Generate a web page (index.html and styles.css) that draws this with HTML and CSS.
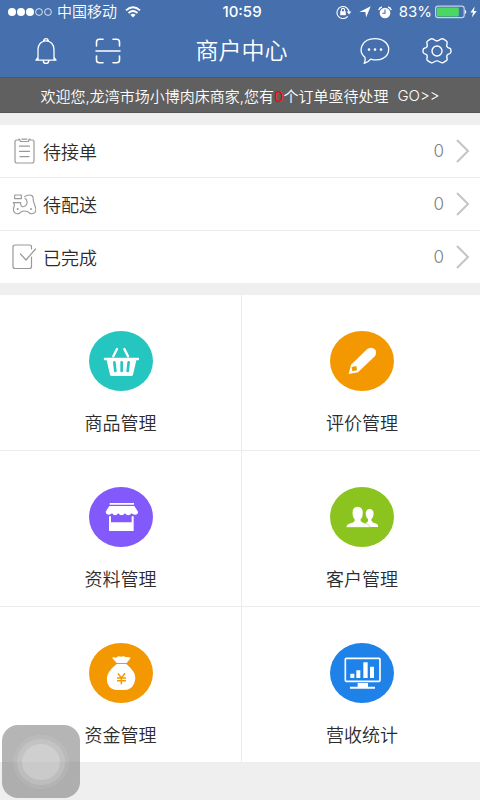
FILE: index.html
```html
<!DOCTYPE html>
<html lang="zh-CN">
<head>
<meta charset="utf-8">
<meta name="viewport" content="width=device-width, initial-scale=1">
<title>商户中心</title>
<link rel="stylesheet" href="styles.css">
</head>
<body>
<header class="top">
  <div class="status">
    <div class="status-side">
      <svg class="signal" width="46" height="10" viewBox="0 0 46 10" fill="#fff"><circle cx="5" cy="5" r="4"/><circle cx="14" cy="5" r="4"/><circle cx="23" cy="5" r="4"/><g fill="none" stroke="#fff" stroke-width=".8"><circle cx="32" cy="5" r="3.4"/><circle cx="41" cy="5" r="3.4"/></g></svg>
      <span>中国移动</span>
      <svg class="wifi" width="16" height="12" viewBox="0 0 16 12" fill="none" stroke="#fff" stroke-width="1.9"><path d="M1 4.4Q8-1.8 15 4.4M3.5 7Q8 3.2 12.5 7"/><path d="M5.4 8.7Q8 6.6 10.6 8.7L8 11.4Z" fill="#fff" stroke="none"/></svg>
    </div>
    <time class="clock">10:59</time>
    <div class="status-side status-end">
      <svg width="16" height="14" viewBox="0 0 16 14" fill="none" stroke="#fff" stroke-width="1.1"><path d="M11.7 11.3A6 6 0 1 1 13 7.6"/><path d="M10.8 6.6h4.6L13.1 9.4Z" fill="#fff" stroke="none"/><path d="M4.2 6.2h5.6v4H4.2Z" fill="#fff" stroke="none"/><path d="M5.4 6.4V5a1.6 1.6 0 0 1 3.2 0v1.4"/></svg>
      <svg width="12" height="12" viewBox="0 0 12 12" fill="#fff"><path d="M11.7.3 7.1 11.6 6.4 6H.4Z"/></svg>
      <svg width="14" height="13" viewBox="0 0 14 13"><circle cx="7" cy="7" r="5.3" fill="#fff"/><path d="M.8 4.1Q1.3 1.7 3.9 1M13.2 4.1Q12.7 1.7 10.1 1" fill="none" stroke="#fff" stroke-width="1.3"/><path d="M7 3.6V7.3H4.2" fill="none" stroke="#456fad" stroke-width="1.1"/></svg>
      <span class="percent">83%</span>
      <svg class="battery" width="42" height="14" viewBox="0 0 42 14"><rect x=".6" y="1.2" width="28.6" height="11.4" rx="2.4" fill="none" stroke="#c7d2e6" stroke-width="1.2"/><rect x="1.8" y="2.4" width="22" height="9" rx="1" fill="#4bd763"/><path d="M30 4.4Q32.5 6.8 30 9.2Z" fill="#fff"/><path d="M39.6 1.6 35.4 7.6h2.6L36.8 12.4 41.8 6H39Z" fill="#fff"/></svg>
    </div>
  </div>
  <nav class="bar">
    <div class="bar-side">
      <button class="icon-button" type="button" aria-label="通知"><svg width="24" height="28" viewBox="0 0 24 28" fill="none" stroke="#fff" stroke-width="1.3" stroke-linecap="round" stroke-linejoin="round"><path d="M2 23.2h20M4 23V12.6C4 7.3 7.4 3.9 12 3.9s8 3.4 8 8.7V23M4 20.5 2 23.2M20 20.5l2 2.7M9.8 4.2C9.6.7 14.4.7 14.2 4.2M9.2 23.8c.5 3.5 5.1 3.5 5.6 0"/></svg></button>
      <button class="icon-button" type="button" aria-label="扫一扫"><svg width="26" height="26" viewBox="0 0 26 26" fill="none" stroke="#fff" stroke-width="1.6" stroke-linecap="round"><path d="M1.5 8V4q0-2.8 2.8-2.8H8M18 1.2h3.7q2.8 0 2.8 2.8v4M1.5 18v4q0 2.8 2.8 2.8H8M18 24.8h3.7q2.8 0 2.8-2.8v-4M1 13h24"/></svg></button>
    </div>
    <h1 class="title">商户中心</h1>
    <div class="bar-side bar-end">
      <button class="icon-button" type="button" aria-label="消息"><svg width="30" height="28" viewBox="0 0 30 28" fill="none" stroke="#fff" stroke-width="1.3" stroke-linejoin="round"><path d="M4.9 20.3C-2.8 13.5 2 1.6 15 1.6c7.6 0 13.7 4.5 13.7 10.6 0 8.7-9.3 12.5-18 9.9Q8 25.5 4.2 26.3 5.6 23.8 4.9 20.3Z"/><g fill="#fff" stroke="none"><circle cx="9" cy="12.6" r="1.3"/><circle cx="15" cy="12.6" r="1.3"/><circle cx="21" cy="12.6" r="1.3"/></g></svg></button>
      <button class="icon-button" type="button" aria-label="设置"><svg width="30" height="28" viewBox="0 0 30 28" fill="none" stroke="#fff" stroke-width="1.4" stroke-linejoin="round"><path d="M8.4 2.2Q10 1.2 11.5 2.3 15 5.5 18.5 2.3 20 1.2 21.6 2.2L24.4 4Q25.7 5 25 6.8C24.1 9.5 25.3 10.7 27.7 11.2Q29 11.6 29 13.9T27.7 16.6C25.2 17.3 24.2 18.5 25 21.1Q25.6 22.7 24.4 23.7L21.6 25.4Q20 26.4 18.5 25.3 15 22.4 11.5 25.3 10 26.4 8.4 25.4L5.6 23.7Q4.4 22.7 5 21.1C5.8 18.5 4.8 17.3 2.3 16.6Q1 16.2 1 13.9T2.3 11.2C4.7 10.7 5.9 9.5 5 6.8Q4.3 5 5.6 4Z"/><circle cx="15" cy="14" r="5"/></svg></button>
    </div>
  </nav>
</header>
<a class="notice" href="#orders"><span>欢迎您,龙湾市场小博肉床商家,您有<span class="alert">0</span>个订单亟待处理</span><span>GO&gt;&gt;</span></a>
<main>
  <section class="orders" id="orders">
    <a class="order" href="#pending">
      <svg width="24" height="26" viewBox="0 0 24 26" fill="none" stroke="#999" stroke-width="1.2" stroke-linecap="round"><path d="M7 2H4.6Q3 2 3 3.8v19Q3 25 4.8 25h15.4Q22 25 22 22.8v-19Q22 2 20.4 2H18M7 1.2Q8 1 8.5 3.5h8Q17 1 18 1.2M10 1.2h5M7.5 8.2h10M7.5 13.4h10M8 18.6h9"/></svg>
      <span>待接单</span><span class="count">0</span>
      <svg class="chevron" width="14" height="24" viewBox="0 0 14 24"><path d="m1 1 11 11L1 23"/></svg>
    </a>
    <a class="order" href="#delivery">
      <svg width="24" height="26" viewBox="36 212 72 78" fill="none" stroke="#999" stroke-width="3.4" stroke-linecap="round" stroke-linejoin="round"><path d="M44 224h20v11H44ZM40 247h22v6q3 9 12 5 9-5 7-14-1-7-6-10M74 229q6-5 14-5 9 0 11 6 0 13 5 24 7 17 0 23-8 6-16 1-4-6-15-6-10 0-13 6-8 5-16-1-7-7-1-20 1-5-3-10"/><g fill="#999" stroke="none"><circle cx="53" cy="266" r="3"/><circle cx="93" cy="266" r="3"/></g></svg>
      <span>待配送</span><span class="count">0</span>
      <svg class="chevron" width="14" height="24" viewBox="0 0 14 24"><path d="m1 1 11 11L1 23"/></svg>
    </a>
    <a class="order" href="#done">
      <svg width="24" height="26" viewBox="0 0 24 26" fill="none" stroke="#999" stroke-width="1.2" stroke-linecap="round"><path d="M19.5 5V3Q19.5 1 17.5 1H3Q1 1 1 3v19.5Q1 24.5 3 24.5h14.5q2 0 2-2V13M8.5 10l5.5 6L23.5 5"/></svg>
      <span>已完成</span><span class="count">0</span>
      <svg class="chevron" width="14" height="24" viewBox="0 0 14 24"><path d="m1 1 11 11L1 23"/></svg>
    </a>
  </section>
  <section class="tiles">
    <a class="tile" href="#goods"><span class="disc teal"><svg width="64" height="60" viewBox="0 0 192 180" fill="#fff"><path d="M46 80h103q3 4 0 8h-7l-10 43q-1 4-6 4H69q-5 0-6-4L53 88h-7q-4-4 0-8Z"/><path d="m84 54-11 22M106 54l11 22" fill="none" stroke="#fff" stroke-width="7" stroke-linecap="round"/><path d="m76 94 3 26M98 94v26M119 94l-3 26" fill="none" stroke="#25c5c0" stroke-width="8" stroke-linecap="round"/></svg></span>商品管理</a>
    <a class="tile" href="#reviews"><span class="disc orange"><svg width="64" height="60" viewBox="0 0 192 180" fill="#fff"><path d="M56 129 63 101 111 55q7-6 16-4 12 3 11 15l-2 8-52 50Z"/><path d="M65 108 79 105 81 118 67 121Z" fill="#f39800"/></svg></span>评价管理</a>
    <a class="tile" href="#profile"><span class="disc purple"><svg width="64" height="60" viewBox="0 0 192 180" fill="#fff"><path d="M62 48h73v5H62ZM61 57h75l11 17q1 9-9 9-7 0-10-4-5 6-10 6-6 0-10-6-5 6-10 6-6 0-10-6-5 6-10 6-5 0-9-6-4 4-9 4-9 0-10-9Z"/><path d="M60 88h6v18h62V88h6v44H60Z"/></svg></span>资料管理</a>
    <a class="tile" href="#customers"><span class="disc green"><svg width="64" height="60" viewBox="0 0 192 180" fill="#fff"><path d="M106 108q10-2 8-11-7-8-7-17 1-14 12-14t12 14q0 9-7 17-1 8 6 10 12 2 14 8v5h-24q-4-9-14-12Z"/><path d="M49 121q0-10 14-13 12-3 11-10-7-8-7-20 0-19 16-19t16 19q0 12-7 20-1 7 11 10 15 3 17 13Z" stroke="#8bc31f" stroke-width="1"/></svg></span>客户管理</a>
    <a class="tile" href="#funds"><span class="disc orange"><svg width="64" height="60" viewBox="0 0 192 180" fill="#fff"><path d="M69 44q6-3 12 0 8-6 15-3 8-4 15 2 7-2 14 2L113 60H83ZM83 63h29q12 10 22 24 9 16 1 35-8 19-32 19H88q-25 0-32-19-6-19 4-35 8-13 23-24Z"/><path d="m87 91 10 14 11-14M97 105v19M84 105h27M84 113h27" fill="none" stroke="#f39800" stroke-width="4.5"/></svg></span>资金管理</a>
    <a class="tile" href="#revenue"><span class="disc blue"><svg width="64" height="60" viewBox="0 0 192 180" fill="#fff"><rect x="46" y="46" width="104" height="69" rx="3" fill="none" stroke="#fff" stroke-width="5"/><path d="M61 92h12v13H61ZM79 82h12v23H79ZM100 58h13v47h-13ZM120 71h12v34h-12ZM83 120h31v11h21v6H60v-6h23Z"/></svg></span>营收统计</a>
  </section>
</main>
<button class="assist" type="button" aria-label="辅助菜单"></button>
</body>
</html>
```
FILE: styles.css
```css
* {
  box-sizing: border-box;
}

body {
  margin: 0;
  min-height: 100vh;
  background: #efefef;
  color: #2c2c2c;
  font-family: Inter, "Noto Sans CJK SC", sans-serif;
  font-size: 18px;
  font-weight: 350;
}

a {
  color: inherit;
  text-decoration: none;
}

svg {
  display: block;
  flex: none;
}

button {
  padding: 0;
  border: 0;
  background: none;
}

.top {
  background: #456fad;
  color: #fff;
}

.status {
  display: grid;
  grid-template-columns: 1fr auto 1fr;
  align-items: center;
  height: 24px;
  padding: 0 3px 0 7px;
  font-size: 15px;
  line-height: 24px;
}

.status-side,
.bar-side {
  display: flex;
  align-items: center;
}

.signal {
  margin-right: 4px;
}

.wifi {
  margin-left: 8px;
}

.clock {
  font-weight: 500;
}

.status-end {
  justify-content: flex-end;
  gap: 7px;
}

.percent {
  font-weight: 400;
}

.battery {
  margin-left: -4px;
}

.bar {
  display: grid;
  grid-template-columns: 1fr auto 1fr;
  align-items: center;
  height: 53px;
  padding: 0 23px 0 26px;
}

.bar-side {
  gap: 22px;
}

.bar-end {
  justify-content: flex-end;
}

.icon-button {
  display: grid;
  place-items: center;
  width: 40px;
  height: 40px;
}

.title {
  margin: 0;
  font-size: 23px;
  font-weight: 350;
  line-height: 38px;
}

.notice {
  display: flex;
  justify-content: center;
  align-items: center;
  gap: 9px;
  height: 36px;
  border-top: 1px solid #4e5666;
  border-bottom: 1px solid #555;
  background: #606060;
  color: #fff;
  font-size: 15px;
  white-space: nowrap;
}

.alert {
  color: #f00;
  font-weight: 400;
}

.orders {
  margin: 12px 0;
  background: #fff;
}

.order {
  display: flex;
  align-items: center;
  height: 53px;
  padding: 0 10px 0 12px;
  border-bottom: 1px solid #ececec;
  gap: 7px;
}

.order:last-child {
  height: 52px;
  border-bottom: 0;
}

.count {
  margin-left: auto;
  color: #808080;
  font-size: 17px;
}

.chevron {
  margin-left: 5px;
  fill: none;
  stroke: #c4c4c4;
  stroke-width: 2;
}

.tiles {
  display: grid;
  grid-template-columns: 121fr 119fr;
  background: #fff;
}

.tile {
  display: flex;
  flex-direction: column;
  align-items: center;
  gap: 20px;
  height: 156px;
  padding-top: 36px;
  border-bottom: 1px solid #ececec;
  line-height: 26px;
}

.tile:nth-child(odd) {
  border-right: 1px solid #ececec;
}

.tile:nth-child(even) {
  padding-left: 2px;
}

.disc {
  border-radius: 50%;
}

.teal {
  background: #25c5c0;
}

.orange {
  background: #f39800;
}

.purple {
  background: #8259fb;
}

.green {
  background: #8bc31f;
}

.blue {
  background: #1e82e8;
}

.assist {
  position: fixed;
  left: 2px;
  bottom: 2px;
  display: grid;
  place-items: center;
  width: 78px;
  height: 73px;
  border-radius: 16px;
  background: rgba(120, 120, 120, 0.55);
}

.assist::before {
  content: "";
  width: 38px;
  height: 36px;
  border-radius: 50%;
  background: rgba(255, 255, 255, 0.35);
  box-shadow: 0 0 0 5px rgba(255, 255, 255, 0.14), 0 0 0 9px rgba(255, 255, 255, 0.08);
}
```
